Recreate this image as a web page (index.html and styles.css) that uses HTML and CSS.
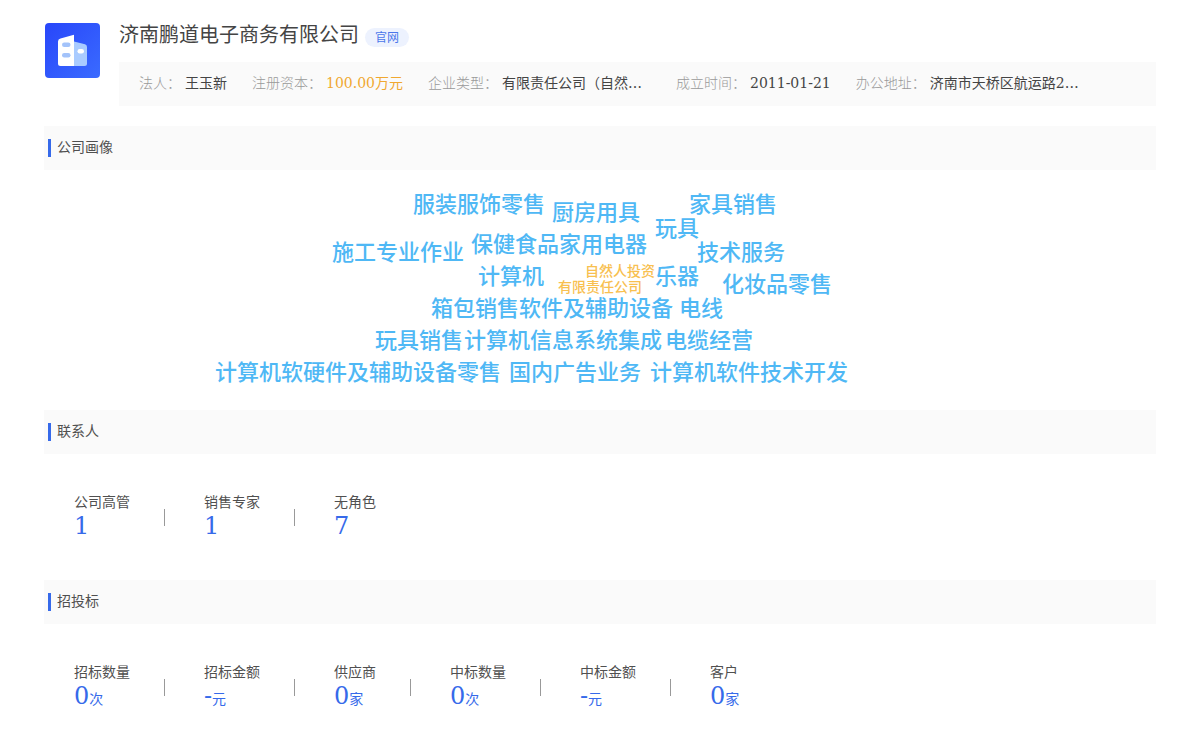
FILE: index.html
```html
<!DOCTYPE html>
<html lang="zh-CN">
<head>
<meta charset="utf-8">
<meta name="viewport" content="width=device-width, initial-scale=1">
<title>济南鹏道电子商务有限公司</title>
<link rel="stylesheet" href="styles.css">
</head>
<body>
<main class="page">
  <header class="company">
    <svg class="company-logo" viewBox="0 0 55 55" aria-hidden="true">
      <defs>
        <linearGradient id="tile" x1="0" y1="0" x2="1" y2="1">
          <stop offset="0" stop-color="#2846fa"/>
          <stop offset="1" stop-color="#3a6bff"/>
        </linearGradient>
      </defs>
      <rect width="55" height="55" rx="4" fill="url(#tile)"/>
      <path d="M29 18.500L40 21.200Q42 21.800 42 24V40.500Q42 43 39.500 43H29Z" fill="#a9cbff"/>
      <path d="M15.500 15.600L29 11.800V43H15.500Q13 43 13 40.500V18.500Q13 16.300 15.500 15.600Z" fill="#fff"/>
      <rect x="17" y="19.500" width="8.500" height="4.500" rx="2.200" fill="#a3c3fa"/>
      <rect x="17" y="30" width="8.500" height="4.500" rx="2.200" fill="#a3c3fa"/>
      <rect x="32.500" y="26" width="6.500" height="4.500" rx="2.200" fill="#fff"/>
    </svg>
    <div class="company-body">
      <div class="company-title">
        <h1 class="company-name">济南鹏道电子商务有限公司</h1>
        <a class="site-link" href="#">官网</a>
      </div>
      <dl class="facts">
        <div class="fact"><dt>法人：</dt><dd>王玉新</dd></div>
        <div class="fact"><dt>注册资本：</dt><dd class="capital">100.00万元</dd></div>
        <div class="fact"><dt>企业类型：</dt><dd class="long">有限责任公司（自然…</dd></div>
        <div class="fact"><dt>成立时间：</dt><dd>2011-01-21</dd></div>
        <div class="fact"><dt>办公地址：</dt><dd class="long">济南市天桥区航运路2…</dd></div>
      </dl>
    </div>
  </header>

  <section>
    <h2 class="section-head">公司画像</h2>
    <div class="cloud">
      <span class="word" style="left:369px;top:19px">服装服饰零售</span>
      <span class="word" style="left:508px;top:27px">厨房用具</span>
      <span class="word" style="left:645px;top:19px">家具销售</span>
      <span class="word" style="left:611px;top:43px">玩具</span>
      <span class="word" style="left:288px;top:67px">施工专业作业</span>
      <span class="word" style="left:427px;top:59px">保健食品家用电器</span>
      <span class="word" style="left:653px;top:67px">技术服务</span>
      <span class="word" style="left:434px;top:91px">计算机</span>
      <span class="word minor" style="left:541px;top:91px">自然人投资</span>
      <span class="word minor" style="left:514px;top:107px">有限责任公司</span>
      <span class="word" style="left:611px;top:91px">乐器</span>
      <span class="word" style="left:678px;top:99px">化妆品零售</span>
      <span class="word" style="left:387px;top:123px">箱包销售</span>
      <span class="word" style="left:475px;top:123px">软件及辅助设备</span>
      <span class="word" style="left:635px;top:123px">电线</span>
      <span class="word" style="left:331px;top:155px">玩具销售</span>
      <span class="word" style="left:420px;top:155px">计算机信息系统集成</span>
      <span class="word" style="left:621px;top:155px">电缆经营</span>
      <span class="word" style="left:171px;top:187px">计算机软硬件及辅助设备零售</span>
      <span class="word" style="left:465px;top:187px">国内广告业务</span>
      <span class="word" style="left:606px;top:187px">计算机软件技术开发</span>
    </div>
  </section>

  <section>
    <h2 class="section-head">联系人</h2>
    <dl class="stats">
      <div class="stat"><dt>公司高管</dt><dd>1</dd></div>
      <div class="stat"><dt>销售专家</dt><dd>1</dd></div>
      <div class="stat"><dt>无角色</dt><dd>7</dd></div>
    </dl>
  </section>

  <section>
    <h2 class="section-head">招投标</h2>
    <dl class="stats">
      <div class="stat"><dt>招标数量</dt><dd>0<small>次</small></dd></div>
      <div class="stat"><dt>招标金额</dt><dd>-<small>元</small></dd></div>
      <div class="stat"><dt>供应商</dt><dd>0<small>家</small></dd></div>
      <div class="stat"><dt>中标数量</dt><dd>0<small>次</small></dd></div>
      <div class="stat"><dt>中标金额</dt><dd>-<small>元</small></dd></div>
      <div class="stat"><dt>客户</dt><dd>0<small>家</small></dd></div>
    </dl>
  </section>
</main>
</body>
</html>
```
FILE: styles.css
```css
* {
  box-sizing: border-box;
}

body {
  margin: 0;
  background: #fff;
  color: #444;
  font: 14px/20px "DejaVu Serif", "Noto Sans CJK SC", serif;
}

h1, h2, dl, dd {
  margin: 0;
  font-weight: 400;
}

.page {
  padding: 20px 44px;
}

.company {
  display: flex;
  align-items: flex-start;
  gap: 19px;
  margin-bottom: 20px;
  padding-left: 1px;
}

.company-logo {
  flex: none;
  width: 55px;
  height: 55px;
  margin-top: 3px;
}

.company-body {
  flex: 1;
  min-width: 0;
}

.company-title {
  display: flex;
  align-items: center;
  gap: 6px;
  margin-bottom: 12px;
}

.company-name {
  font-size: 20px;
  line-height: 30px;
}

.site-link {
  margin-top: 4px;
  padding: 1px 10px 0;
  border-radius: 10px;
  background: #edf2fe;
  color: #4a76ea;
  font-size: 12px;
  line-height: 18px;
  text-decoration: none;
}

.facts {
  display: flex;
  flex-wrap: wrap;
  column-gap: 25px;
  padding: 10px 20px 12px;
  background: #fafafa;
  line-height: 22px;
}

.fact {
  display: flex;
  gap: 4px;
}

.fact dt {
  color: #999;
  font-weight: 300;
}

.fact .long {
  width: 149px;
  white-space: nowrap;
}

.fact .capital {
  color: #f0a830;
}

.section-head {
  display: flex;
  align-items: flex-start;
  gap: 6px;
  height: 44px;
  padding: 13px 4px;
  background: #fafafa;
  color: #505050;
  font-size: 14px;
  line-height: 16px;
}

.section-head::before {
  content: "";
  width: 3px;
  height: 18px;
  background: #366aea;
}

.cloud {
  position: relative;
  height: 240px;
}

.word {
  position: absolute;
  color: #4fb8f5;
  font-size: 22px;
  font-weight: 500;
  line-height: 32px;
  white-space: nowrap;
}

.word.minor {
  color: #f8c050;
  font-size: 14px;
  line-height: 20px;
}

.stats {
  display: flex;
  flex-wrap: wrap;
  padding: 37px 30px 41px;
}

.stat {
  display: flex;
  flex-direction: column;
}

.stat:not(:last-child) {
  margin-right: 39px;
  padding-right: 35px;
  background: linear-gradient(#999, #999) right 18px / 1px 17px no-repeat;
}

.stat dt {
  color: #505050;
  line-height: 22px;
}

.stat dd {
  color: #366aea;
  font-size: 24px;
  line-height: 26px;
}

.stat small {
  font-size: 14px;
}
```
